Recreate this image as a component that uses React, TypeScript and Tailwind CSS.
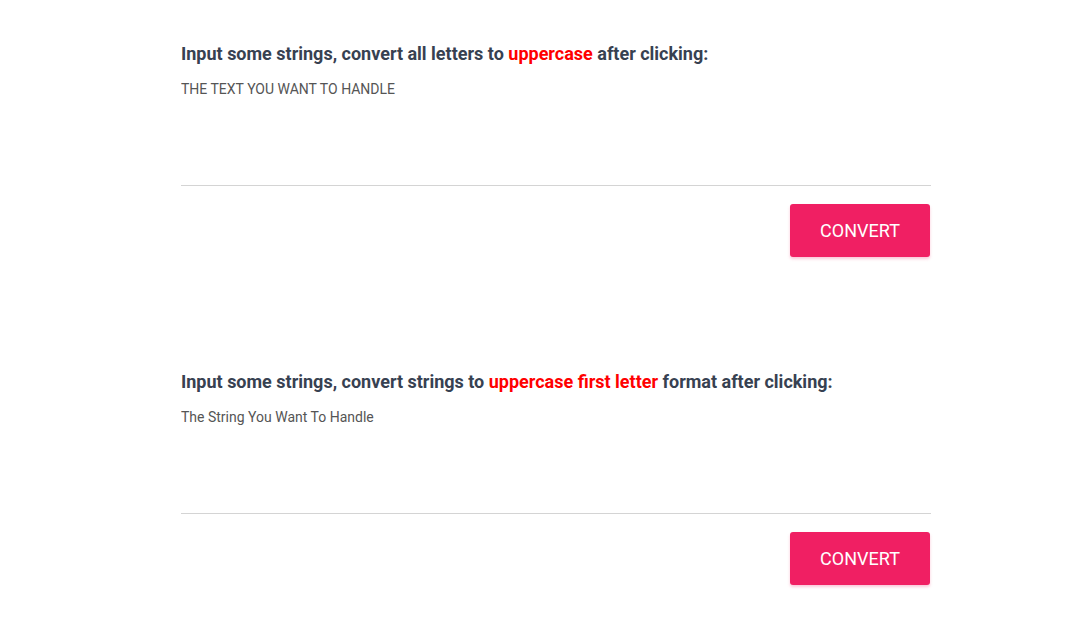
import { useState } from "react";

const Section = ({
  before,
  accent,
  after,
  placeholder,
  convert,
}: {
  before: string;
  accent: string;
  after: string;
  placeholder: string;
  convert: (s: string) => string;
}) => {
  const [text, setText] = useState(placeholder);

  return (
    <div className="flex flex-col">
      <h2 className="text-[18px] leading-[27px] font-bold text-[#374151]">
        {before}
        <span className="text-[#ff0000]">{accent}</span>
        {after}
      </h2>
      <textarea
        value={text}
        onChange={(e) => setText(e.target.value)}
        className="mt-[12px] h-[107px] w-full resize-none border-b border-[#d4d4d4] text-[14px] leading-[20px] text-[#555555] outline-none"
      />
      <div className="flex justify-end pr-px">
        <button
          onClick={() => setText(convert(text))}
          className="mt-[18px] h-[53px] w-[140px] rounded-[3px] bg-[#f01f63] text-[18px] text-white shadow-[0_2px_3px_rgba(240,31,99,0.25)]"
        >
          CONVERT
        </button>
      </div>
    </div>
  );
};

const App = () => {
  return (
    <div
      className="min-h-[618px] bg-white pl-[181px] pt-[40px]"
      style={{ fontFamily: "Roboto, 'Liberation Sans', sans-serif" }}
    >
      <div className="flex w-[750px] flex-col gap-[111px]">
        <Section
          before="Input some strings, convert all letters to "
          accent="uppercase"
          after=" after clicking:"
          placeholder="THE TEXT YOU WANT TO HANDLE"
          convert={(s) => s.toUpperCase()}
        />
        <Section
          before="Input some strings, convert strings to "
          accent="uppercase first letter"
          after=" format after clicking:"
          placeholder="The String You Want To Handle"
          convert={(s) => s.replace(/\b\w/g, (c) => c.toUpperCase())}
        />
      </div>
    </div>
  );
};

export default App;
